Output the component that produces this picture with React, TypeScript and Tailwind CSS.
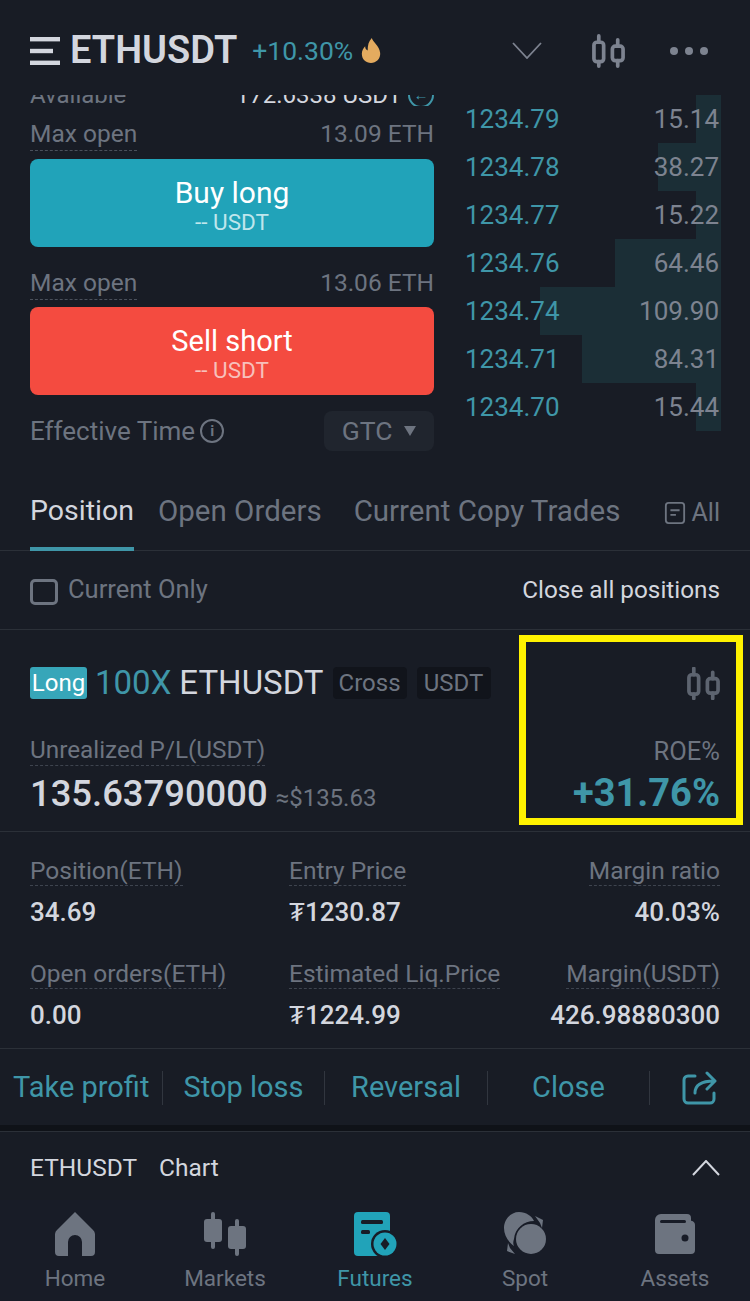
const bookRows = [
  { price: "1234.79", size: "15.14", depth: 25 },
  { price: "1234.78", size: "38.27", depth: 63 },
  { price: "1234.77", size: "15.22", depth: 25 },
  { price: "1234.76", size: "64.46", depth: 106 },
  { price: "1234.74", size: "109.90", depth: 181 },
  { price: "1234.71", size: "84.31", depth: 139 },
  { price: "1234.70", size: "15.44", depth: 25 },
];

const stats = [
  [
    { label: "Position(ETH)", value: "34.69" },
    { label: "Entry Price", value: "₮1230.87" },
    { label: "Margin ratio", value: "40.03%" },
  ],
  [
    { label: "Open orders(ETH)", value: "0.00" },
    { label: "Estimated Liq.Price", value: "₮1224.99" },
    { label: "Margin(USDT)", value: "426.98880300" },
  ],
];

function CandleIcon({ className }: { className: string }) {
  return (
    <svg viewBox="0 0 34 34" fill="none" stroke="currentColor" strokeWidth="3.8" strokeLinecap="round" aria-hidden className={className}>
      <rect x="2" y="8" width="10" height="20" rx="3" />
      <path d="M7 1.5V8M7 28v4.5" />
      <rect x="21" y="12" width="11" height="15" rx="3" />
      <path d="M26.5 5.5V12M26.5 27v5.5" />
    </svg>
  );
}

function ActionItem({ label, width, className, last }: { label: string; width: string; className?: string; last?: boolean }) {
  return (
    <div className={`flex h-[34px] items-center justify-center ${width} ${className ?? ""} ${last ? "" : "border-r border-[#31363f]"}`}>
      <span className="whitespace-nowrap text-[29px] text-[#3f96a8]">{label}</span>
    </div>
  );
}

function NavItem({ label, active, children }: { label: string; active?: boolean; children: React.ReactNode }) {
  return (
    <div className="flex flex-col items-center">
      <div className="flex h-[46px] items-center justify-center">{children}</div>
      <span className={`mt-[8px] text-[22.5px] leading-[26px] ${active ? "text-[#3f96a8]" : "text-[#6d7480]"}`}>{label}</span>
    </div>
  );
}

export default function App() {
  return (
    <div className="h-[1301px] w-[750px] overflow-hidden bg-[#181c25] font-['Roboto',sans-serif]">
      <header className="flex h-[95px] items-center pl-[30px] pr-[42px] pt-[6px]">
        <svg viewBox="0 0 30 28" aria-hidden className="h-[28px] w-[30px]" fill="#d3d6de">
          <rect width="30" height="4.4" />
          <rect y="11.8" width="23" height="4.4" />
          <rect y="23.6" width="30" height="4.4" />
        </svg>
        <span className="ml-[10px] text-[38px] font-semibold text-[#d3d6de]">ETHUSDT</span>
        <span className="ml-[15px] text-[26.5px] text-[#3f96a8]">+10.30%</span>
        <svg viewBox="0 0 24 30" aria-hidden className="ml-[6px] h-[25px] w-[24px]">
          <path
            d="M13 0c1 5 9 9 10 18 .6 7-5 12-11 12S1 26 1 19c0-4 2-7 4-9 0 3 1 4 3 5 0-6 1-11 5-15z"
            fill="#e4ab5f"
          />
        </svg>
        <svg viewBox="0 0 30 17" fill="none" stroke="#7d8390" strokeWidth="1.8" aria-hidden className="ml-auto h-[17px] w-[30px]">
          <path d="M1 1l14 15L29 1" />
        </svg>
        <CandleIcon className="ml-[50px] h-[34px] w-[33px] text-[#7d8390]" />
        <div className="ml-[45px] flex gap-[7px]">
          <span className="h-[8px] w-[8px] rounded-full bg-[#7d8390]" />
          <span className="h-[8px] w-[8px] rounded-full bg-[#7d8390]" />
          <span className="h-[8px] w-[8px] rounded-full bg-[#7d8390]" />
        </div>
      </header>

      <section className="flex h-[360px] pl-[30px] pr-[30px]">
        <div className="w-[404px]">
          <div className="h-[11px] overflow-hidden">
            <div className="-mt-[14px] flex items-center justify-between text-[24px] leading-[28px]">
              <span className="text-[#6d7480]">Available</span>
              <span className="flex items-center gap-[6px] text-[#d3d6de]">
                172.6338 USDT
                <span className="flex h-[26px] w-[26px] items-center justify-center rounded-full border-2 border-[#3f96a8] text-[15px] text-[#3f96a8]">←</span>
              </span>
            </div>
          </div>
          <div className="flex h-[53px] items-start justify-between pt-[14px] text-[24.5px] leading-[28px] text-[#6d7480]">
            <span className="border-b border-dashed border-[#4a505b] pb-[2px]">Max open</span>
            <span>13.09 ETH</span>
          </div>
          <button type="button" className="flex h-[88px] w-full flex-col items-center justify-center rounded-[8px] bg-[#21a3b9] pt-[3px] text-white">
            <span className="text-[30px] leading-[32px]">Buy long</span>
            <span className="mt-[2px] text-[22.5px] leading-[22px] text-[#bfe6ec]">-- USDT</span>
          </button>
          <div className="flex h-[60px] items-start justify-between pt-[22px] text-[24.5px] leading-[28px] text-[#6d7480]">
            <span className="border-b border-dashed border-[#4a505b] pb-[2px]">Max open</span>
            <span>13.06 ETH</span>
          </div>
          <button type="button" className="flex h-[88px] w-full flex-col items-center justify-center rounded-[8px] bg-[#f44b40] pt-[3px] text-white">
            <span className="text-[29px] leading-[32px]">Sell short</span>
            <span className="mt-[2px] text-[22.5px] leading-[22px] text-[#f7c0bb]">-- USDT</span>
          </button>
          <div className="mt-[16px] flex h-[40px] items-center justify-between">
            <div className="flex items-center gap-[5px] text-[26px] text-[#6d7480]">
              Effective Time
              <span className="flex h-[24px] w-[24px] items-center justify-center rounded-full border-2 border-[#6d7480] text-[15px] font-bold">i</span>
            </div>
            <div className="flex h-[40px] w-[110px] items-center justify-center gap-[12px] rounded-[8px] bg-[#20252e] text-[26.5px] text-[#6d7480]">
              GTC
              <span className="h-0 w-0 border-x-[6px] border-t-[10px] border-x-transparent border-t-[#6d7480]" />
            </div>
          </div>
        </div>

        <div className="ml-[31px] w-[255px]">
          {bookRows.map((row) => (
            <div key={row.price} className="relative flex h-[48px] items-center justify-between pr-[1px] text-[26px]">
              <div className="absolute inset-y-0 right-[-1px] bg-[#1b2e36]" style={{ width: row.depth }} />
              <span className="relative text-[#3f96a8]">{row.price}</span>
              <span className="relative text-[#7d8390]">{row.size}</span>
            </div>
          ))}
        </div>
      </section>

      <nav className="flex h-[96px] items-start border-b border-[#2b3038] pl-[30px] pr-[30px] pt-[34px] text-[29.5px]">
        <div className="relative h-[62px] w-[104px] pt-[1px] text-[28.5px] text-[#d3d6de]">
          Position
          <span className="absolute bottom-0 left-0 right-0 h-[4px] bg-[#3f96a8]" />
        </div>
        <span className="ml-[24px] text-[#6d7480]">Open Orders</span>
        <span className="ml-[32px] text-[#6d7480]">Current Copy Trades</span>
        <div className="ml-auto flex items-center gap-[6px] pt-[5px] text-[25px] text-[#6d7480]">
          <svg viewBox="0 0 24 24" fill="none" stroke="currentColor" strokeWidth="2" aria-hidden className="h-[24px] w-[22px]">
            <rect x="2" y="1" width="20" height="22" rx="3" />
            <path d="M7 9h10M7 14h6" />
          </svg>
          All
        </div>
      </nav>

      <div className="flex h-[79px] items-center justify-between border-b border-[#2b3038] pl-[30px] pr-[30px]">
        <div className="flex items-center gap-[10px] text-[25.5px] text-[#6d7480]">
          <span className="mt-[4px] h-[26px] w-[28px] rounded-[5px] border-[3px] border-[#6d7480]" />
          <span className="-mt-[2px]">Current Only</span>
        </div>
        <span className="pt-[1px] text-[24.3px] text-[#d3d6de]">Close all positions</span>
      </div>

      <section className="relative h-[202px] border-b border-[#2b3038] pl-[30px] pr-[30px]">
        <div className="flex h-[32px] translate-y-[37px] items-center">
          <span className="flex h-[32px] w-[57px] items-center justify-center rounded-[3px] bg-[#37a6b9] text-[24px] text-white">Long</span>
          <span className="ml-[8px] text-[33px] text-[#3f96a8]">100X</span>
          <span className="ml-[8px] text-[33px] text-[#d3d6de]">ETHUSDT</span>
          <span className="ml-[9px] flex h-[32px] w-[74px] items-center justify-center rounded-[4px] bg-[#11141b] text-[24px] text-[#6d7480]">Cross</span>
          <span className="ml-[10px] flex h-[32px] w-[74px] items-center justify-center rounded-[4px] bg-[#11141b] text-[24px] text-[#6d7480]">USDT</span>
          <CandleIcon className="ml-auto h-[33px] w-[33px] text-[#5d6470]" />
        </div>
        <div className="mt-[74px] flex items-center justify-between text-[24.3px] leading-[28px] text-[#6d7480]">
          <span className="border-b border-dashed border-[#3e444f] pb-[1px]">Unrealized P/L(USDT)</span>
          <span className="text-[25.5px]">ROE%</span>
        </div>
        <div className="mt-[5px] flex items-baseline">
          <span className="text-[36.4px] font-medium leading-[44px] text-[#d3d6de]">135.63790000</span>
          <span className="ml-[8px] text-[24px] text-[#6d7480]">≈$135.63</span>
          <span className="ml-auto text-[38px] font-bold leading-[44px] text-[#3f96a8]">+31.76%</span>
        </div>
        <div className="absolute left-[519px] top-[5px] h-[190px] w-[224px] border-[7px] border-[#fff200]" />
      </section>

      <section className="h-[217px] border-b border-[#2b3038] pl-[30px] pr-[30px] pt-[24px]">
        {stats.map((row, index) => (
          <div key={row[0].label} className={`grid grid-cols-[259px_1fr_auto] ${index === 1 ? "mt-[32px]" : ""}`}>
            {row.map((stat, col) => (
              <div key={stat.label} className={col === 2 ? "text-right" : ""}>
                <span className="border-b border-dashed border-[#3e444f] text-[24.5px] leading-[30px] text-[#6d7480]">{stat.label}</span>
                <p className="mt-[11px] text-[26px] font-medium leading-[30px] text-[#d3d6de]">{stat.value}</p>
              </div>
            ))}
          </div>
        ))}
      </section>

      <div className="flex h-[76px] items-center pl-[13px] pt-[2px]">
        <ActionItem label="Take profit" width="w-[150px]" className="justify-start" />
        <ActionItem label="Stop loss" width="w-[162px]" />
        <ActionItem label="Reversal" width="w-[163px]" />
        <ActionItem label="Close" width="w-[162px]" />
        <div className="flex flex-1 items-center justify-center">
          <svg viewBox="0 0 36 34" fill="none" stroke="#3f96a8" strokeWidth="3" strokeLinecap="round" strokeLinejoin="round" aria-hidden className="h-[34px] w-[36px]">
            <path d="M13 5H6a4 4 0 0 0-4 4v19a4 4 0 0 0 4 4h22a4 4 0 0 0 4-4v-6" />
            <path d="M13 22c0-8 6-12 19-12M25 2l8 8-8 8" />
          </svg>
        </div>
      </div>

      <div className="h-[6px] bg-[#0f1218]" />

      <div className="flex h-[69px] items-center justify-between border-t border-[#2b3038] pl-[30px] pr-[30px] pt-[4px] text-[24.5px] text-[#d3d6de]">
        <div className="flex gap-[22px]">
          <span>ETHUSDT</span>
          <span>Chart</span>
        </div>
        <svg viewBox="0 0 28 16" fill="none" stroke="#d3d6de" strokeWidth="2" aria-hidden className="h-[16px] w-[28px]">
          <path d="M1 15L14 1l13 14" />
        </svg>
      </div>

      <footer className="grid h-[101px] grid-cols-5 bg-[#181c27] pt-[11px]">
        <NavItem label="Home">
          <svg viewBox="0 0 40 44" fill="#6d7480" aria-hidden className="h-[44px] w-[40px]">
            <path d="M20 0L38 18a6 6 0 0 1 2 4v18a4 4 0 0 1-4 4H27V30a7 7 0 0 0-14 0v14H4a4 4 0 0 1-4-4V22a6 6 0 0 1 2-4z" />
          </svg>
        </NavItem>
        <NavItem label="Markets">
          <svg viewBox="0 0 42 44" fill="#6d7480" aria-hidden className="h-[44px] w-[42px]">
            <rect x="0" y="7" width="18" height="23" rx="3" />
            <rect x="7" y="0" width="4" height="37" rx="2" />
            <rect x="24" y="14" width="18" height="23" rx="3" />
            <rect x="31" y="7" width="4" height="37" rx="2" />
          </svg>
        </NavItem>
        <NavItem label="Futures" active>
          <svg viewBox="0 0 43 44" aria-hidden className="h-[44px] w-[43px]">
            <rect width="36" height="44" rx="4" fill="#21a3b9" />
            <rect x="7" y="8" width="22" height="4" rx="1.5" fill="#181c27" />
            <rect x="7" y="18" width="9" height="4" rx="1.5" fill="#181c27" />
            <circle cx="31" cy="32" r="14" fill="#181c27" />
            <circle cx="31" cy="32" r="11.5" fill="#21a3b9" />
            <path d="M31 26l4.5 6-4.5 6-4.5-6z" fill="#181c27" />
          </svg>
        </NavItem>
        <NavItem label="Spot">
          <svg viewBox="0 0 44 44" fill="#6d7480" aria-hidden className="h-[44px] w-[44px]">
            <path d="M16 0c7 0 13 4 15 9-10 0-19 7-20 18-1 3-1 5 0 7C5 30 1 23 1 16 1 7 8 0 16 0z" />
            <circle cx="28" cy="27" r="15" />
            <path d="M32 4l8 4-1 8-2-5zM12 42l-8-3 1-8 2 5z" />
          </svg>
        </NavItem>
        <NavItem label="Assets">
          <svg viewBox="0 0 40 40" aria-hidden className="h-[40px] w-[40px]">
            <path d="M6 0h26a4 4 0 0 1 4 4v3h-1a4 4 0 0 1 5 4v25a4 4 0 0 1-4 4H4a4 4 0 0 1-4-4V6a6 6 0 0 1 6-6z" fill="#6d7480" />
            <rect x="5" y="6" width="26" height="3" rx="1.5" fill="#181c27" />
            <circle cx="30" cy="24" r="3.5" fill="#181c27" />
          </svg>
        </NavItem>
      </footer>
    </div>
  );
}
